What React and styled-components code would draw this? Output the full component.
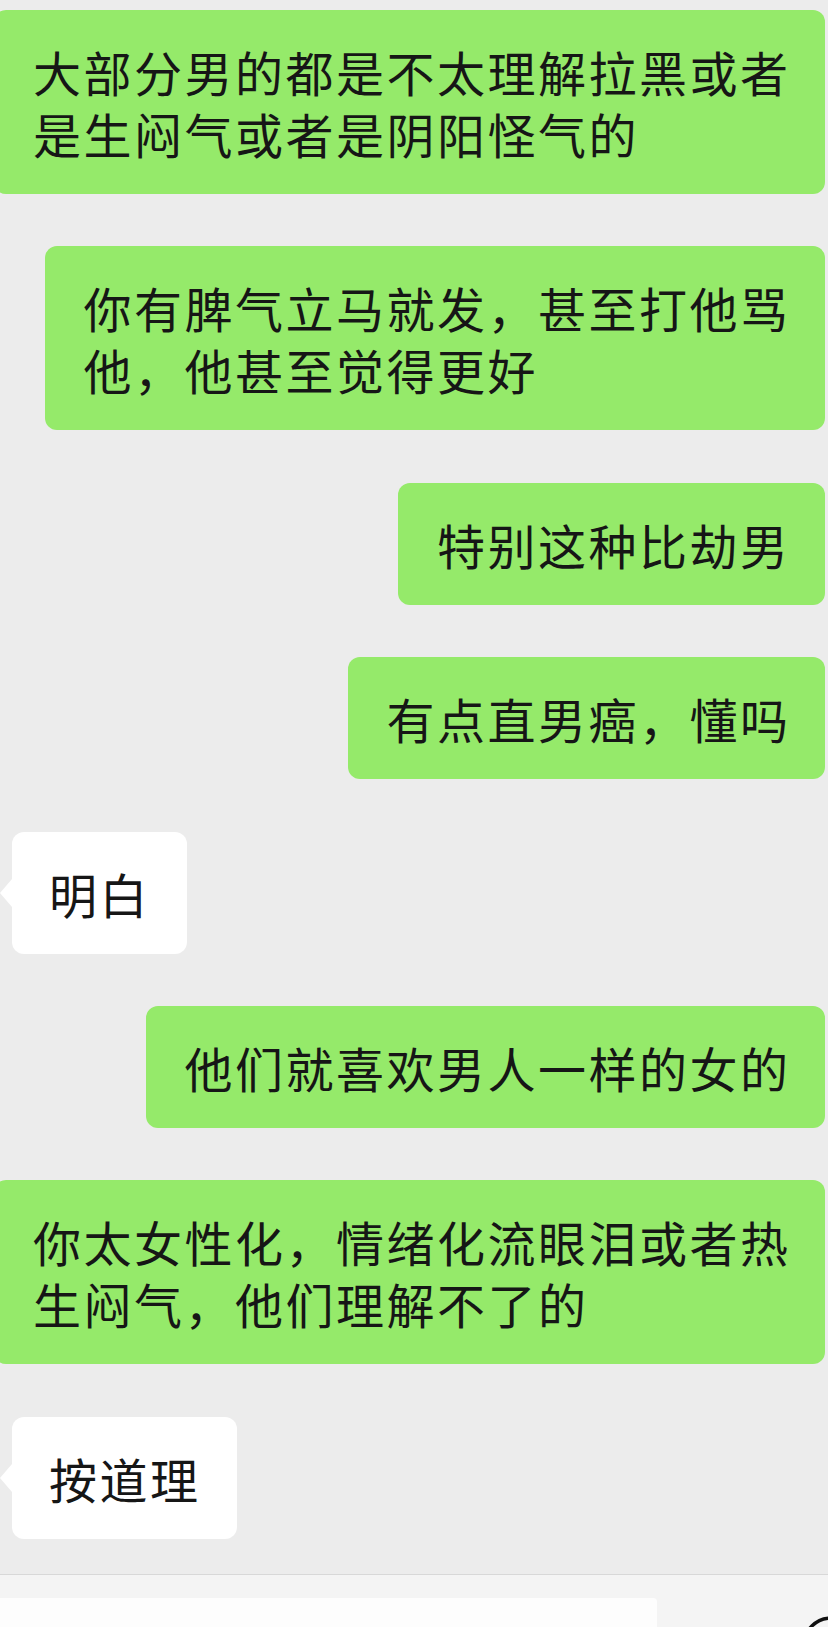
import React from 'react';
import styled, { createGlobalStyle } from 'styled-components';

const GlobalStyle = createGlobalStyle`
    html, body {
        margin: 0;
        padding: 0;
        background: #ededed;
    }
    body {
        font-family: "Noto Sans CJK SC", "Noto Sans", sans-serif;
    }
`;

// 전체 화면
const Page = styled.div`
    width: 828px;
    height: 1627px;
    display: flex;
    flex-direction: column;
    overflow: hidden;
    background: #ececec;
`;

// 메시지 목록
const ChatList = styled.div`
    display: flex;
    flex-direction: column;
    gap: 52.4px;
    padding: 10px 3px 0 0;
`;

// 말풍선 (긴 문장은 왼쪽 화면 밖으로 살짝 넘침)
const Bubble = styled.div`
    position: relative;
    box-sizing: border-box;
    align-self: ${props => (props.$mine ? 'flex-end' : 'flex-start')};
    margin-left: ${props => (props.$mine ? '0' : '12px')};
    background: ${props => (props.$mine ? '#95ea6a' : '#ffffff')};
    color: #161616;
    border-radius: 12px;
    padding: ${props => (props.$mine ? '30px 34.5px 30px 38.5px' : '30px 36.5px 30px 37px')};
    font-size: 48px;
    line-height: 62px;
    letter-spacing: 2.5px;
    white-space: pre;

    ${props => !props.$mine && `
        &::before {
            content: '';
            position: absolute;
            left: -12px;
            top: 50%;
            transform: translateY(-50%);
            border-right: 12px solid #ffffff;
            border-top: 14px solid transparent;
            border-bottom: 14px solid transparent;
        }
    `}
`;

// 하단 입력창
const Footer = styled.div`
    margin-top: auto;
    height: 52px;
    border-top: 1px solid #d8d8d8;
    background: #f4f4f4;
    display: flex;
    align-items: flex-end;
`;

const InputBox = styled.div`
    width: 657px;
    height: 29px;
    background: #fdfdfd;
    border-top-right-radius: 4px;
`;

const IconSlot = styled.div`
    flex: 1;
    height: 29px;
    overflow: hidden;
    display: flex;
`;

const messages = [
    { mine: true, text: '大部分男的都是不太理解拉黑或者\n是生闷气或者是阴阳怪气的' },
    { mine: true, text: '你有脾气立马就发，甚至打他骂\n他，他甚至觉得更好' },
    { mine: true, text: '特别这种比劫男' },
    { mine: true, text: '有点直男癌，懂吗' },
    { mine: false, text: '明白' },
    { mine: true, text: '他们就喜欢男人一样的女的' },
    { mine: true, text: '你太女性化，情绪化流眼泪或者热\n生闷气，他们理解不了的' },
    { mine: false, text: '按道理' },
];

const App = () => (
    <Page>
        <GlobalStyle />
        <ChatList>
            {messages.map((m, i) => (
                <Bubble key={i} $mine={m.mine}>{m.text}</Bubble>
            ))}
        </ChatList>
        <Footer>
            <InputBox />
            <IconSlot>
                <svg width="171" height="29" viewBox="0 0 171 29">
                    <circle cx="174" cy="47" r="27" fill="none" stroke="#111" strokeWidth="3.5" />
                </svg>
            </IconSlot>
        </Footer>
    </Page>
);

export default App;
